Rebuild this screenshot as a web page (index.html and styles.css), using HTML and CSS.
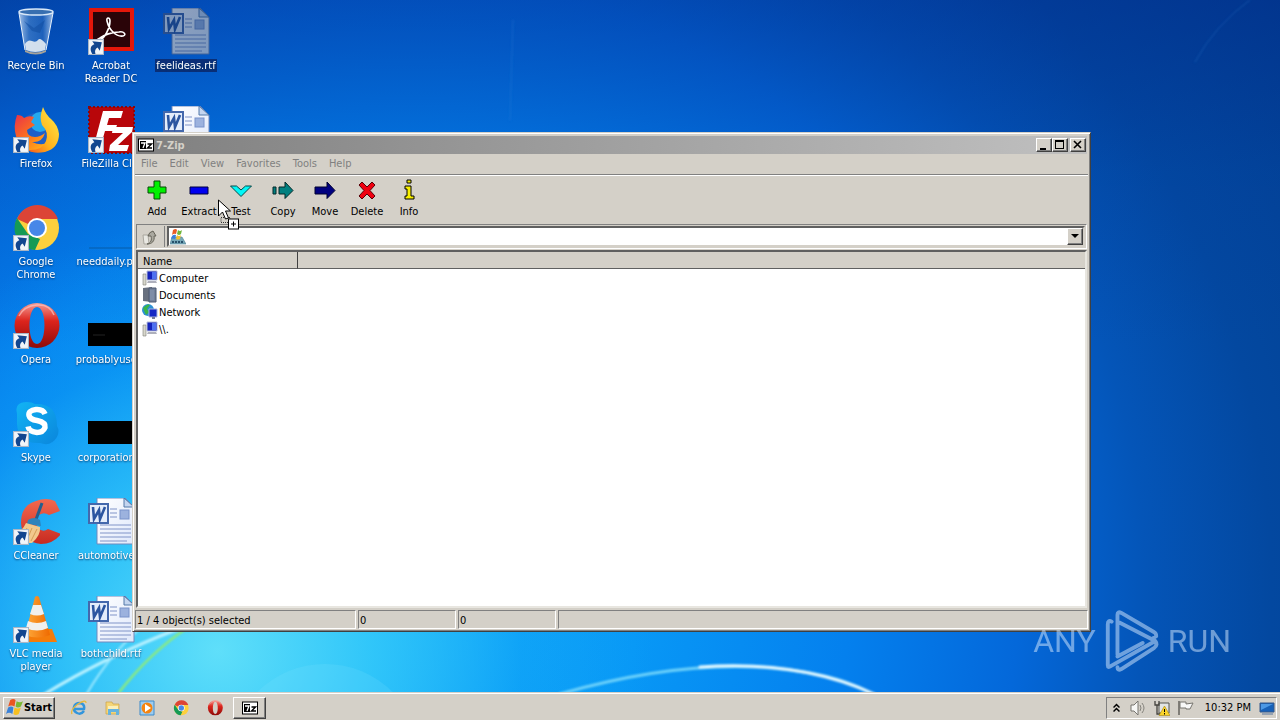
FILE: index.html
```html
<!DOCTYPE html>
<html lang="en">
<head>
<meta charset="utf-8">
<title>7-Zip</title>
<link rel="stylesheet" href="styles.css">
</head>
<body>
<svg class="defs" aria-hidden="true">
  <defs>
    <linearGradient id="gOrange" x1="0" y1="0" x2="1" y2="1"><stop offset="0" stop-color="#e8324a"/><stop offset=".5" stop-color="#ff7a18"/><stop offset="1" stop-color="#ffd21e"/></linearGradient>
    <linearGradient id="gFlame" x1="1" y1="0" x2="0" y2="1"><stop offset="0" stop-color="#fff04a"/><stop offset=".6" stop-color="#ffb01c"/><stop offset="1" stop-color="#f4581c"/></linearGradient>
    <linearGradient id="gOpera" x1="0" y1="0" x2="0" y2="1"><stop offset="0" stop-color="#f59b93"/><stop offset=".4" stop-color="#dc241c"/><stop offset="1" stop-color="#8d0b09"/></linearGradient>
    <linearGradient id="gSkype" x1="0" y1="0" x2="1" y2="1"><stop offset="0" stop-color="#12b4f4"/><stop offset="1" stop-color="#0a86dc"/></linearGradient>
    <linearGradient id="gPage" x1="0" y1="0" x2="1" y2="1"><stop offset="0" stop-color="#fff"/><stop offset="1" stop-color="#dfe8fb"/></linearGradient>
    <linearGradient id="gGlass" x1="0" y1="0" x2="1" y2="0"><stop offset="0" stop-color="#dbeafa" stop-opacity=".75"/><stop offset=".3" stop-color="#4d88cc" stop-opacity=".6"/><stop offset=".7" stop-color="#2f6fc0" stop-opacity=".6"/><stop offset="1" stop-color="#dbeafa" stop-opacity=".7"/></linearGradient>
    <linearGradient id="gCc" x1="0" y1="0" x2="0" y2="1"><stop offset="0" stop-color="#f4694f"/><stop offset="1" stop-color="#c72a20"/></linearGradient>
    <linearGradient id="gCone" x1="0" y1="0" x2="1" y2="0"><stop offset="0" stop-color="#ffab3c"/><stop offset="1" stop-color="#ef6a00"/></linearGradient>
  </defs>
  <symbol id="shortcut" viewBox="0 0 15 15"><rect x=".5" y=".5" width="14" height="14" fill="#f2f5f9" stroke="#a9b6c6"/><path d="M4 14C1 9 3 6 6 5L4 2l9 1-2 8-2-3C7 9 6 11 7 14z" fill="#12468f"/></symbol>
  <symbol id="bin" viewBox="0 0 48 48"><path d="M7 4l6 38q10 5 21 0l7-38z" fill="url(#gGlass)"/><path d="M13 36q3-5 7-3t6-1 8 4l-1 6q-10 4-19 0z" fill="#e6ecf2" opacity=".9"/><path d="M12 13l10 7 11-8-5 13-8-2z" fill="#1450a4" opacity=".6"/><ellipse cx="24" cy="4" rx="17" ry="3" fill="#386fb0" stroke="#d8e8f8" stroke-width="1.500"/><path d="M7 5l6 37M41 5l-7 37" stroke="#e9f3fc" fill="none"/><path d="M13 42q10 5 21 0v2q-10 5-21 0z" fill="#a5a29a"/></symbol>
  <symbol id="acrobat" viewBox="0 0 48 48"><rect x="2" width="45" height="43" fill="#e3170a"/><rect x="6" y="4" width="37" height="35" fill="#2a0408"/><path d="M10 34c8-3 13-14 13-21 0-4-4-4-3 0 2 9 9 16 16 15 4-1 1-5-4-4-7 0-15 3-19 6-4 2-5 5-3 4z" fill="none" stroke="#fff" stroke-width="1.600"/></symbol>
  <symbol id="word" viewBox="0 0 48 48"><path d="M10 0h28l9 9v37H10z" fill="url(#gPage)" stroke="#7089bd"/><path d="M37 0v9h10z" fill="#c4d5ef" stroke="#5378a8"/><path d="M23 11h7M23 15h7M23 19h7M13 27h31M13 31h31M13 35h31M13 39h31M13 43h27" stroke="#8094c8"/><rect x="33" y="12" width="9" height="9" fill="#9cb2de" stroke="#7892ca"/><rect x="2" y="6" width="19" height="19" fill="#e4edfb" stroke="#4468ac" stroke-width="2"/><path d="M6 9l1 12 5-9 1 9 5-12" fill="none" stroke="#2b55a0" stroke-width="2.600"/></symbol>
  <symbol id="firefox" viewBox="0 0 48 48"><circle cx="25" cy="25" r="18" fill="#1d5fc8"/><circle cx="28" cy="16" r="10" fill="#24a9ee"/><path d="M5 9q5 0 7 3 5-3 10-1l-3 5 4 3-8 5q0 7 8 7 5 0 10-4-3 10-13 9 15 7 22-7l1 3Q38 46 25 46 8 46 4 30 1 20 5 9z" fill="url(#gOrange)"/><path d="M31 1q3 8 8 12 7 6 8 15 0 14-14 18-12 2-17-2 14 1 18-9 3-9-4-16-3-8 1-18z" fill="url(#gFlame)"/></symbol>
  <symbol id="filezilla" viewBox="0 0 48 48"><rect x="2" y="1" width="45" height="46" fill="#b8060a" stroke="#8f0508" stroke-width="2" stroke-dasharray="2 2"/><path d="M16 5h20l-2 7H22l-2 7h10l-2 6H18l-4 14H7zM26 21h20l-1 5-14 13h11l-2 6H22l1-6 13-12H25z" fill="#fff"/></symbol>
  <symbol id="chrome" viewBox="0 0 48 48"><circle cx="25" cy="24" r="22" fill="#fcd03e"/><path d="M25 24L5 15A22 22 0 0 1 46 15H25z" fill="#dc4436"/><path d="M5 14l11 16 12 5-5 11A22 22 0 0 1 5 14z" fill="#159a55"/><circle cx="25" cy="24" r="10" fill="#fff"/><circle cx="25" cy="24" r="8" fill="#4787e8"/></symbol>
  <symbol id="opera" viewBox="0 0 48 48"><path fill-rule="evenodd" d="M25 1a22 22 0 1 0 0 45a22 22 0 1 0 0-45zM25 5c10 0 10 37 0 37s-10-37 0-37z" fill="url(#gOpera)"/><path d="M7 14Q12 4 25 3t17 10" fill="none" stroke="#fbc3bd" stroke-width="1.500" opacity=".7"/></symbol>
  <symbol id="skype" viewBox="0 0 48 48"><path d="M5 14Q2 2 15 2q5 0 8 2 22-1 22 22 3 5 0 11-6 10-17 6Q6 44 5 24z" fill="url(#gSkype)"/><path d="M33 14q-2-5-9-4.500-8 1-7 6 1 4 8 5 9 2 8 7-2 5-8 5-8-1-9-6" fill="none" stroke="#fff" stroke-width="5.500"/></symbol>
  <symbol id="ccleaner" viewBox="0 0 48 48"><path d="M43 3L48 13 37 17Q31 13 26 18q-4 6 0 12 5 5 10 1l13 5Q41 46 29 46 10 44 9 25 9 7 24 3q10-4 19 0z" fill="url(#gCc)"/><path d="M30 5l-8 22" stroke="#235f8e" stroke-width="3"/><path d="M16 22q6-4 12 0l1 6-14-2z" fill="#2f83bb"/><path d="M14 25l14 4q1 8-8 16Q8 46 1 37q9-3 13-12z" fill="#f2c98c"/><path d="M15 30l-5 9M20 30l-5 12M25 31l-6 12" stroke="#d49c54"/></symbol>
  <symbol id="vlc" viewBox="0 0 48 48"><path d="M9 33h31l5 13H4z" fill="#f47c0a"/><path d="M23 1q2-2 4 0l11 38q-12 5-25 0z" fill="url(#gCone)"/><path d="M21 9h8l3 9q-7 3-14 0zM16 25q9 4 18 0l2 7q-11 5-22 0z" fill="#f1f0ee"/></symbol>
  <symbol id="sevenzip" viewBox="0 0 16 14"><rect x=".5" y="1" width="15" height="12" fill="#fff" stroke="#000" stroke-width="1"/><rect x="2" y="3" width="6" height="8"/><path d="M3 5h4L5 10" fill="none" stroke="#fff" stroke-width="1.300"/><path d="M9.500 6h4l-4 4h4.500" fill="none" stroke="#000" stroke-width="1.400"/></symbol>
  <symbol id="pc" viewBox="0 0 16 16"><path d="M1 4h3v11H1z" fill="#d8d7cc" stroke="#807f78" stroke-width=".6"/><path d="M5 1h10v9H5z" fill="#1523bb" stroke="#b6bdd8"/><path d="M10 2h4v7h-4z" fill="#4f71f0"/><path d="M6 11h8l1 2H5z" fill="#aeb0bc"/></symbol>
</svg>

<main class="desktop">
  <svg class="wallpaper" viewBox="0 0 1280 692" preserveAspectRatio="none" aria-hidden="true">
    <defs><filter id="soft"><feGaussianBlur stdDeviation="1.200"/></filter></defs>
    <circle cx="325" cy="760" r="96" fill="#8be8ff" opacity=".16"/>
    <g fill="none" filter="url(#soft)" stroke-linecap="round">
      <path d="M43 695Q105 657 178 629" stroke="#b9f2ff" stroke-width="3"/>
      <path d="M86 695Q112 650 150 620" stroke="#9eeaff" stroke-width="2"/>
      <path d="M117 695Q150 652 190 626" stroke="#8deb7c" stroke-width="2.500"/>
      <path d="M560 694Q690 657 790 670Q840 676 872 694" stroke="#6fd3fb" stroke-width="3"/>
      <path d="M700 667Q800 660 874 694" stroke="#e8fbff" stroke-width="3"/>
      <path d="M1195 62Q1215 25 1250 0M510 120l3-100" stroke="#3c8bdc" stroke-width="1" opacity=".35"/>
    </g>
  </svg>

  <div class="icons">
    <button class="icon"><span class="pic"><svg><use href="#bin"/></svg></span><span class="name">Recycle Bin</span></button>
    <button class="icon"><span class="pic"><svg><use href="#firefox"/></svg><svg class="link"><use href="#shortcut"/></svg></span><span class="name">Firefox</span></button>
    <button class="icon"><span class="pic"><svg><use href="#chrome"/></svg><svg class="link"><use href="#shortcut"/></svg></span><span class="name">Google Chrome</span></button>
    <button class="icon"><span class="pic"><svg><use href="#opera"/></svg><svg class="link"><use href="#shortcut"/></svg></span><span class="name">Opera</span></button>
    <button class="icon"><span class="pic"><svg><use href="#skype"/></svg><svg class="link"><use href="#shortcut"/></svg></span><span class="name">Skype</span></button>
    <button class="icon"><span class="pic"><svg><use href="#ccleaner"/></svg><svg class="link"><use href="#shortcut"/></svg></span><span class="name">CCleaner</span></button>
    <button class="icon"><span class="pic"><svg><use href="#vlc"/></svg><svg class="link"><use href="#shortcut"/></svg></span><span class="name">VLC media player</span></button>
    <button class="icon"><span class="pic"><svg><use href="#acrobat"/></svg><svg class="link"><use href="#shortcut"/></svg></span><span class="name">Acrobat Reader DC</span></button>
    <button class="icon"><span class="pic"><svg><use href="#filezilla"/></svg><svg class="link"><use href="#shortcut"/></svg></span><span class="name">FileZilla Clie</span></button>
    <button class="icon"><span class="pic"><svg viewBox="0 0 48 48"><path d="M2 44h46" stroke="#075ca8"/></svg></span><span class="name">needdaily.png</span></button>
    <button class="icon"><span class="pic"><svg viewBox="0 0 48 48"><path d="M1 21h47v23H1z"/><path d="M6 33h12" stroke="#222"/></svg></span><span class="name">probablyuse...</span></button>
    <button class="icon"><span class="pic"><svg viewBox="0 0 48 48"><path d="M1 21h47v23H1z"/></svg></span><span class="name">corporation...</span></button>
    <button class="icon"><span class="pic"><svg><use href="#word"/></svg></span><span class="name">automotive...</span></button>
    <button class="icon"><span class="pic"><svg><use href="#word"/></svg></span><span class="name">bothchild.rtf</span></button>
    <button class="icon selected"><span class="pic"><svg><use href="#word"/></svg></span><span class="name">feelideas.rtf</span></button>
    <button class="icon" aria-label="Document"><span class="pic"><svg><use href="#word"/></svg></span></button>
  </div>

  <section class="window" aria-label="7-Zip">
    <header class="titlebar">
      <svg class="logo"><use href="#sevenzip"/></svg>
      <h1>7-Zip</h1>
      <button class="ctl" aria-label="Minimize"><svg viewBox="0 0 12 10"><path d="M2 8h6v2H2z"/></svg></button>
      <button class="ctl" aria-label="Maximize"><svg viewBox="0 0 12 10"><path d="M1 0h9v9H1zM2 2v6h7V2z" fill-rule="evenodd"/></svg></button>
      <button class="ctl close" aria-label="Close"><svg viewBox="0 0 12 10"><path d="M2 1l7 7M9 1L2 8" stroke="#000" stroke-width="1.600"/></svg></button>
    </header>
    <nav class="menu">
      <button>File</button><button>Edit</button><button>View</button><button>Favorites</button><button>Tools</button><button>Help</button>
    </nav>
    <div class="toolbar">
      <button><svg viewBox="0 0 24 24"><path d="M9 3h6v6h6v6h-6v6H9v-6H3V9h6z" fill="#00f000" stroke="#064806"/></svg>Add</button>
      <button><svg viewBox="0 0 24 24"><path d="M3 9h18v7H3z" fill="#0000f0" stroke="#000040"/></svg>Extract</button>
      <button><svg viewBox="0 0 24 24"><path d="M1.500 8h6L12 12l4.500-4h6L12 18.500z" fill="#00f8f8" stroke="#064848"/></svg>Test</button>
      <button><svg viewBox="0 0 24 24"><path d="M2 9h3v7H2zM8 9h6V4l8 8.500-8 8V16H8z" fill="#008080" stroke="#042828"/></svg>Copy</button>
      <button><svg viewBox="0 0 24 24"><path d="M2 9h12V4l8 8.500-8 8V16H2z" fill="#000080" stroke="#000030"/></svg>Move</button>
      <button><svg viewBox="0 0 24 24"><path d="M4 7l3-3 5 5 5-5 3 3-5 5.500 5 5.500-3 3-5-5-5 5-3-3 5-5.500z" fill="#f00010" stroke="#580008"/></svg>Delete</button>
      <button><svg viewBox="0 0 24 24"><path d="M10 2h4v3h-4zM8 8h6v10h3v3H8v-3h2v-7H8z" fill="#f8f000" stroke="#000"/></svg>Info</button>
    </div>
    <div class="address">
      <button class="up" aria-label="Up one level"><svg viewBox="0 0 16 16"><path d="M2 6h5l1 9H3z" fill="#e9e8e2" stroke="#aaa79f"/><path d="M6 15c4-1 5-4 4-8H7q1-4 5-5l3 5h-2c1 5-2 8-7 8z" fill="#aaa89f" stroke="#656358"/></svg></button>
      <div class="combo">
        <svg class="drive" viewBox="0 0 16 16"><path d="M2 8h10l4 7H0z" fill="#75a7b7" stroke="#4e7f93" stroke-width=".6"/><path d="M2 13h12" stroke="#27506a" stroke-width="2" stroke-dasharray="2 1"/><path d="M3 1q3-2 4 0l-1 4q-2-1-4 1z" fill="#ea5b25"/><path d="M8 1q2 2 4 0l-1 4q-2 2-4 0z" fill="#71b63c"/><path d="M2 7q2-2 4-1l-1 4q-2-1-4 0z" fill="#3a7edc"/><path d="M7 6q2 2 4 0l-1 4q-2 1-4 0z" fill="#f5c02d"/></svg>
        <input type="text" aria-label="Address">
        <button class="drop" aria-label="Show locations"><svg viewBox="0 0 8 5"><path d="M0 0h8L4 4z"/></svg></button>
      </div>
    </div>
    <div class="list">
      <table>
        <thead><tr><th class="first">Name</th><th></th></tr></thead>
        <tbody>
          <tr><td colspan="2"><div class="entry"><svg><use href="#pc"/></svg>Computer</div></td></tr>
          <tr><td colspan="2"><div class="entry"><svg viewBox="0 0 16 16"><path d="M1 1l9-1v15l-9-1z" fill="#68707f"/><path d="M7 1h7v14H7z" fill="#73819a" stroke="#4c5870"/><path d="M9 3v10M11 3v10" stroke="#8c9ab6"/></svg>Documents</div></td></tr>
          <tr><td colspan="2"><div class="entry"><svg viewBox="0 0 16 16"><circle cx="6" cy="6" r="6" fill="#2b8fd4"/><path d="M1 4q5-5 7-3l-3 4 2 3-3 3q-2-4-3-7z" fill="#3bb549"/><path d="M7 5h8v8H7z" fill="#1528c4" stroke="#a9b4dc"/><path d="M10 13h3v2h-3z" fill="#777e98"/></svg>Network</div></td></tr>
          <tr><td colspan="2"><div class="entry"><svg><use href="#pc"/></svg>\\.</div></td></tr>
        </tbody>
      </table>
    </div>
    <footer class="status"><span class="wide">1 / 4 object(s) selected</span><span>0</span><span>0</span><span class="rest"></span></footer>
  </section>

  <div class="watermark"><span>ANY</span><svg viewBox="0 0 56 64"><path d="M7 12q-4-2-4 3v42q0 3 3 1l46-26M52 32L15 13M13 46V5q0-4 4-2l34 20q2 1 2 4l-3 2M13 59q0 4 4 2l34-22q4-3 1-7M13 48l26-14" fill="none" stroke="#d9ecff" stroke-width="4" stroke-linejoin="round" stroke-linecap="round"/></svg><span>RUN</span></div>

  <svg class="cursor" viewBox="0 0 22 30" aria-hidden="true"><path d="M3 18h9v5H3z" fill="none" stroke="#333" stroke-dasharray="1 1"/><path d="M.5.5v16l4-4 3 7 3-1-3-7h5z" fill="#fff" stroke="#000"/><rect x="10.500" y="19.500" width="10" height="10" fill="#fff" stroke="#000"/><path d="M13 24.500h5M15.500 22v5" stroke="#000"/></svg>
</main>

<footer class="taskbar">
  <button class="start"><svg viewBox="0 0 16 16"><path d="M4 1q3-2 5 0L8 7Q5 5 2 7z" fill="#ea5422"/><path d="M10 2q3 2 6 0l-2 5q-3 2-5 0z" fill="#7ab733"/><path d="M2 8q3-2 5 0l-1 6q-3-2-6 0z" fill="#3a82d8"/><path d="M8 8q3 2 6 0l-2 6q-3 2-5 0z" fill="#f7bf20"/></svg>Start</button>
  <div class="quick">
    <button aria-label="Internet Explorer"><svg viewBox="0 0 16 16"><path d="M13 11Q10 15 6 13 2 11 3 7q1-4 6-4 5 1 4 6H4" fill="none" stroke="#3295dc" stroke-width="2.500"/><path d="M1 14Q-1 10 7 4q8-5 8-1" fill="none" stroke="#e8b93c" stroke-width="1.300"/></svg></button>
    <button aria-label="Explorer"><svg viewBox="0 0 16 16"><path d="M1 2h6l1 2h6v10H1z" fill="#f4d577" stroke="#c8a045" stroke-width=".7"/><path d="M3 6h10v4H3z" fill="#fbefb9"/><path d="M3 15V9h11v6h-3v-3H6v3z" fill="#67b3dd"/></svg></button>
    <button aria-label="Media Player"><svg viewBox="0 0 16 16"><path d="M1 1h14v14H1z" fill="#9cccf0" stroke="#3c8bcb"/><circle cx="8" cy="8" r="5.500" fill="#f58410"/><path d="M6 4l6 4-6 4z" fill="#fff"/></svg></button>
    <button aria-label="Chrome"><svg><use href="#chrome"/></svg></button>
    <button aria-label="Opera"><svg><use href="#opera"/></svg></button>
  </div>
  <button class="task" aria-label="7-Zip"><svg><use href="#sevenzip"/></svg></button>
  <div class="tray">
    <svg class="chev" viewBox="0 0 7 10"><path d="M.5 4.500l3-3 3 3M.5 8.500l3-3 3 3" fill="none" stroke="#000" stroke-width="1.500"/></svg>
    <svg viewBox="0 0 16 16"><path d="M1 5h3l4-4v14l-4-4H1z" fill="#f7f7f5" stroke="#77756f"/><path d="M10 5q2 3 0 6M12 3q4 5 0 10" fill="none" stroke="#85837c"/></svg>
    <svg viewBox="0 0 16 16"><path d="M5 3h10v10H5z" fill="#e2e4e4" stroke="#55544f"/><path d="M1 1v4h4V1M3 5v9h3" fill="none" stroke="#44433f" stroke-width="1.300"/><path d="M10.500 6L16 15.500H5z" fill="#fbd52c" stroke="#a58410" stroke-width=".6"/><path d="M10.500 9v3M10.500 13v1.500" stroke="#000"/></svg>
    <svg viewBox="0 0 16 16"><path d="M1 1v14" stroke="#64625c" stroke-width="1.500"/><path d="M2 2h6v2l7-1-3 6H8V8H2z" fill="#f8f8f7" stroke="#77756f"/></svg>
    <time>10:32 PM</time>
    <svg viewBox="0 0 16 16"><path d="M1 3h14v9H1z" fill="#1761b8" stroke="#35588a"/><path d="M2 4h12L2 10z" fill="#4c98e4"/><path d="M3 14h11" stroke="#8193ab" stroke-width="1.500"/></svg>
  </div>
</footer>
</body>
</html>
```
FILE: styles.css
```css
* { box-sizing: border-box; }

body {
  margin: 0;
  min-height: 100vh;
  display: flex;
  flex-direction: column;
  font: 11px/13px "DejaVu Sans Condensed", "DejaVu Sans", sans-serif;
  color: #000;
  background: #0568cc;
}

button {
  font: inherit;
  color: inherit;
  padding: 0;
  border: 0;
  background: none;
}

svg { display: block; flex: none; }
.defs { position: absolute; width: 0; height: 0; }

.desktop {
  position: relative;
  flex: 1;
  overflow: hidden;
  background:
    radial-gradient(ellipse 34% 62% at 17% 94%, rgba(110, 235, 250, .85) 0, rgba(60, 210, 250, .75) 35%, rgba(20, 170, 248, .35) 70%, transparent 100%),
    linear-gradient(180deg, rgba(0, 40, 140, .42) 0, rgba(0, 60, 160, .18) 25%, transparent 50%),
    radial-gradient(circle at 32% 85%, #12a8f8 0, #0898f6 22%, #0480ee 42%, #0468da 58%, #0455b8 70%, #0348a0 82%, #033f90 100%);
}

.wallpaper { position: absolute; inset: 0; width: 100%; height: 100%; }

/* Desktop icons */
.icons {
  position: relative;
  display: grid;
  grid-auto-flow: column;
  grid-template-rows: repeat(7, 98px);
  grid-auto-columns: 72px;
  column-gap: 3px;
  width: max-content;
  height: 684px;
  padding-top: 8px;
}

.icon {
  display: flex;
  flex-direction: column;
  align-items: center;
  gap: 3px;
  color: #fff;
  text-shadow: 0 1px 2px #003468;
}

.pic { position: relative; width: 48px; height: 48px; }
.pic svg { width: 48px; height: 48px; }
.pic .link { position: absolute; left: 1px; bottom: 1px; width: 16px; height: 16px; }
.selected .pic { opacity: .75; filter: brightness(.75); }
.selected .name { padding: 0 1px; background: #0a2f78; white-space: nowrap; }

/* 7-Zip window */
.window {
  position: absolute;
  left: 132px;
  right: 189px;
  top: 132px;
  bottom: 60px;
  display: flex;
  flex-direction: column;
  padding: 2px;
  background: #d4d0c8;
  border: 1px solid;
  border-color: #d4d0c8 #404040 #404040 #d4d0c8;
  box-shadow: inset 1px 1px #fff, inset -1px -1px #808080;
}

.titlebar {
  display: flex;
  align-items: center;
  height: 20px;
  padding: 0 1px 0 2px;
  border: 1px solid #d4d0c8;
  background: linear-gradient(90deg, #808080, #c0c0c0);
}

.logo { width: 16px; height: 14px; }
.titlebar h1 { flex: 1; margin: 0 2px; font: inherit; font-weight: bold; color: #d4d0c8; }

.ctl, .drop, .start, .task {
  display: flex;
  align-items: center;
  justify-content: center;
  background: #d4d0c8;
  border: 1px solid;
  border-color: #fff #404040 #404040 #fff;
  box-shadow: inset -1px -1px #808080;
}

.ctl { width: 16px; height: 14px; }
.ctl svg { width: 12px; height: 10px; }
.close { margin-left: 2px; }

.menu {
  display: flex;
  align-items: center;
  gap: 12px;
  height: 20px;
  padding: 0 6px 2px;
  color: #808080;
  border-bottom: 1px solid #808080;
}

.toolbar { display: flex; height: 49px; padding-left: 1px; border-top: 1px solid #fff; }

.toolbar button {
  display: flex;
  flex-direction: column;
  align-items: center;
  width: 42px;
  padding-top: 2px;
  gap: 3px;
}

.toolbar svg { width: 24px; height: 24px; }

.address {
  display: flex;
  gap: 2px;
  height: 25px;
  margin: 0 1px;
  padding: 1px;
  border: 1px solid;
  border-color: #808080 #fff #fff #808080;
}

.up { width: 27px; padding-left: 3px; border-right: 1px solid #808080; }
.up svg { width: 16px; height: 16px; }

.combo {
  flex: 1;
  display: flex;
  align-items: center;
  background: #fff;
  border: 2px solid;
  border-color: #606060 #d4d0c8 #d4d0c8 #606060;
}

.drive { width: 16px; height: 16px; margin: 0 1px; }
.combo input { flex: 1; min-width: 0; padding: 0; border: 0; background: none; font: inherit; }
.drop { width: 16px; height: 100%; }
.drop svg { width: 8px; height: 5px; }

.list {
  flex: 1;
  min-height: 0;
  margin: 1px 1px 0;
  overflow: hidden;
  background: #fff;
  border: 2px solid;
  border-color: #606060 #e8e6e0 #e8e6e0 #606060;
}

.list table { width: 100%; border-collapse: separate; border-spacing: 0; table-layout: fixed; }

.list th {
  height: 17px;
  padding: 2px 5px 0;
  text-align: left;
  font-weight: normal;
  background: #d4d0c8;
  border-bottom: 1px solid #606060;
}

.list .first { width: 160px; border-right: 1px solid #404040; }
.list td { padding: 0; }
.entry { display: flex; align-items: center; gap: 1px; height: 17px; padding: 1px 0 0 4px; }
.entry svg { width: 16px; height: 16px; }

.status { display: flex; gap: 2px; height: 21px; padding-top: 2px; }

.status span {
  width: 98px;
  padding: 3px 1px 0;
  border: 1px solid;
  border-color: #808080 #fff #fff #808080;
}

.status .wide { width: 221px; }
.status .rest { flex: 1; }

/* Overlays */
.watermark {
  position: absolute;
  right: 49px;
  bottom: 19px;
  display: flex;
  align-items: center;
  gap: 8px;
  opacity: .5;
  color: #d9ecff;
  font: 32px/64px Roboto, "Liberation Sans", sans-serif;
}

.watermark svg { width: 56px; height: 62px; }
.cursor { position: absolute; left: 218px; top: 199px; width: 22px; height: 31px; }

/* Taskbar */
.taskbar {
  display: flex;
  align-items: center;
  height: 28px;
  padding: 2px 3px 0;
  background: #d4d0c8;
  border-top: 1px solid #d4d0c8;
  box-shadow: inset 0 1px #fff;
}

.start { width: 52px; height: 22px; gap: 1px; font-weight: bold; }
.start svg { width: 17px; height: 17px; }
.quick { display: flex; gap: 18px; margin-left: 16px; }
.quick svg { width: 16px; height: 16px; }
.task { width: 33px; height: 22px; margin-left: 10px; }
.task svg { width: 16px; height: 14px; }

.tray {
  display: flex;
  align-items: center;
  gap: 8px;
  height: 22px;
  margin-left: auto;
  padding: 0 1px 0 6px;
  border: 1px solid;
  border-color: #808080 #fff #fff #808080;
}

.tray svg { width: 16px; height: 16px; }
.tray .chev { width: 7px; height: 10px; margin-right: 2px; }
.tray time { margin-left: 3px; }
```
